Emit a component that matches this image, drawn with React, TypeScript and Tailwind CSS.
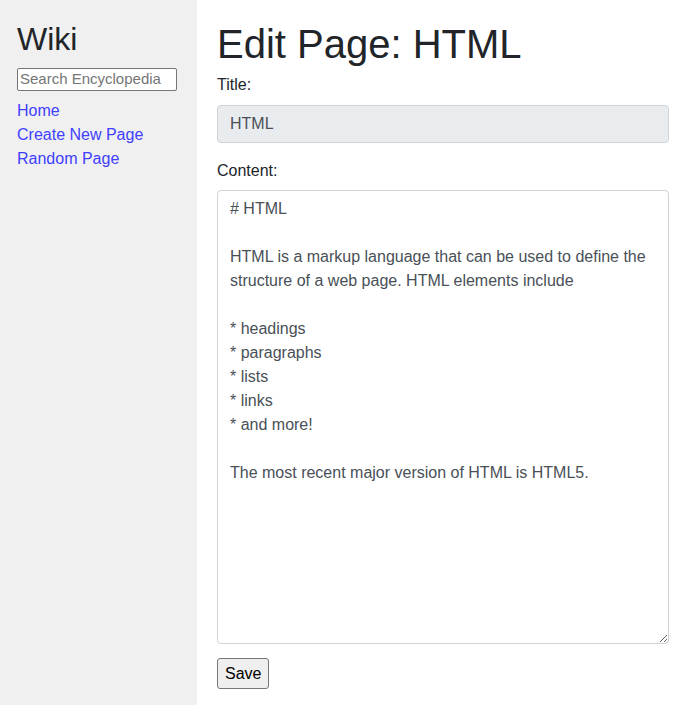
import React from 'react';

const content = `# HTML

HTML is a markup language that can be used to define the structure of a web page. HTML elements include

* headings
* paragraphs
* lists
* links
* and more!

The most recent major version of HTML is HTML5.`;

const App: React.FC = () => {
    return (
        <div className="flex min-h-[705px] font-['Liberation_Sans',Arial,sans-serif] text-[#212529] text-base leading-6">
            {/* Sidebar */}
            <div className="w-[197px] shrink-0 bg-[#f0f0f0] pl-[17px] pt-[20px]">
                <h2 className="text-[32px] leading-[38px] font-normal mb-[9px]">Wiki</h2>
                <input
                    type="text"
                    placeholder="Search Encyclopedia"
                    className="w-[160px] h-[23px] border border-[#767676] rounded-[2px] bg-white px-[2px] text-[15px] placeholder:text-[#757575] mb-[8px]"
                />
                <div className="flex flex-col">
                    <a href="#" className="text-[#4040ff]">Home</a>
                    <a href="#" className="text-[#4040ff]">Create New Page</a>
                    <a href="#" className="text-[#4040ff]">Random Page</a>
                </div>
            </div>

            {/* Main */}
            <div className="flex-1 pl-[20px] pr-[17px] pt-[20px]">
                <h1 className="text-[40px] leading-[48px] font-normal mb-[5px]">Edit Page: HTML</h1>
                <form>
                    <div className="mb-[16px]">
                        <label className="block mb-[8px]">Title:</label>
                        <input
                            type="text"
                            readOnly
                            value="HTML"
                            className="block w-full h-[38px] px-[12px] border border-[#ced4da] rounded-[4px] bg-[#e9ecef] text-[#495057] outline-none"
                        />
                    </div>
                    <div className="mb-[14px]">
                        <label className="block mb-[7px]">Content:</label>
                        <textarea
                            defaultValue={content}
                            className="block w-full h-[454px] px-[12px] py-[6px] border border-[#ced4da] rounded-[4px] bg-white text-[#495057] leading-6 outline-none"
                        />
                    </div>
                    <button
                        type="button"
                        className="h-[31px] px-[7px] border border-[#767676] rounded-[3px] bg-[#efefef] text-black"
                    >
                        Save
                    </button>
                </form>
            </div>
        </div>
    );
};

export default App;
